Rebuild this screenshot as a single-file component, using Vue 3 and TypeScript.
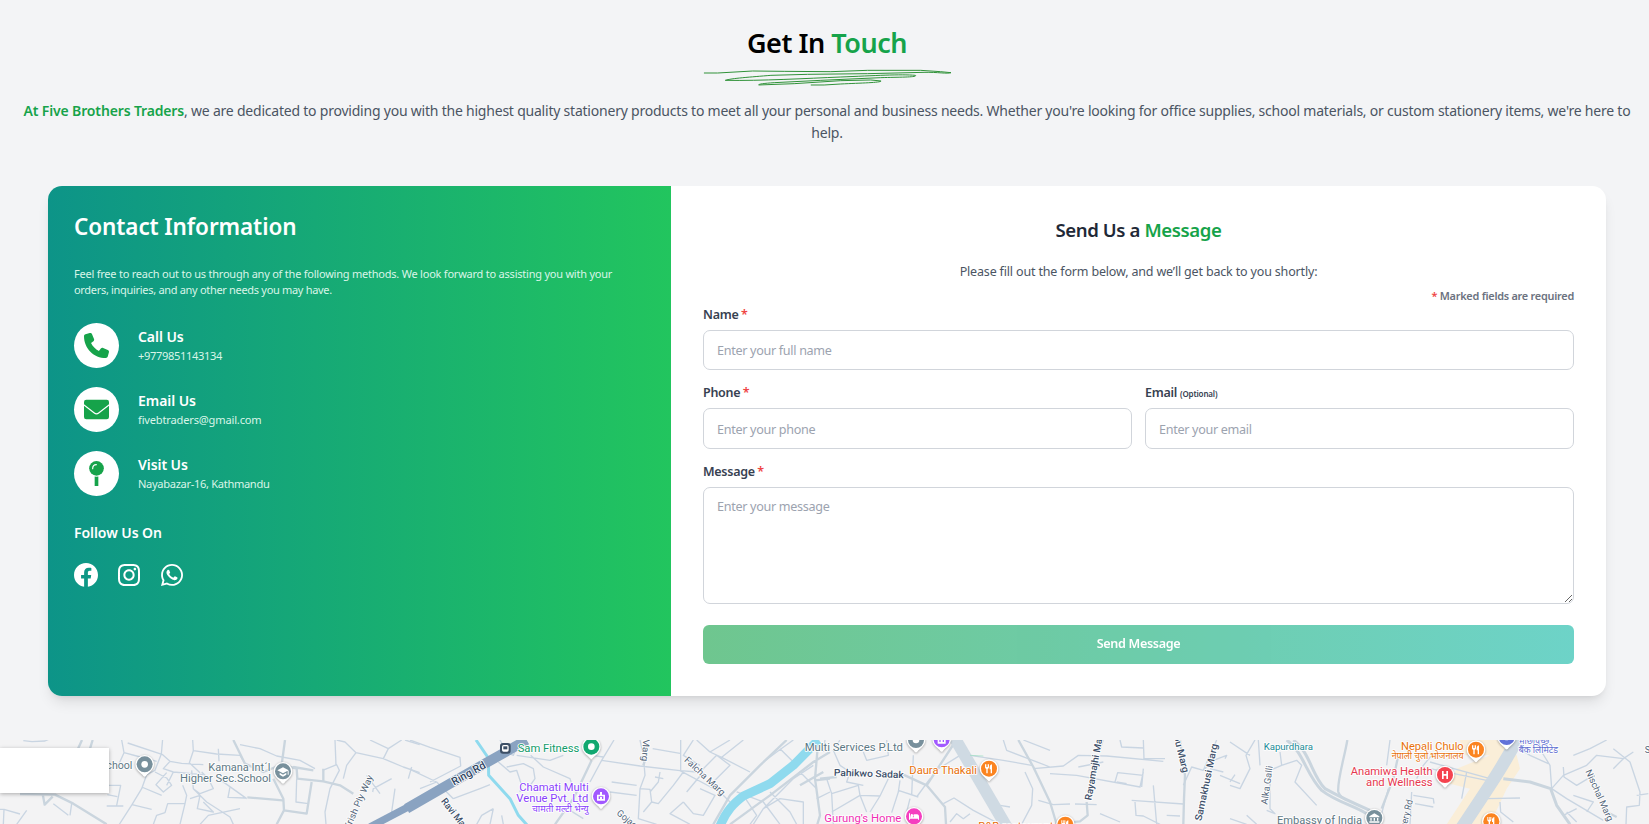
<script setup lang="ts">
interface Road { d: string; w: number; c?: string }
interface Tile { x: number; areas?: { d: string; c: string }[]; roads: Road[] }
interface Label { x: number; y: number; t: string; c: string; s: number; w?: number; a?: 'start' | 'end'; r?: number; b?: number }
interface Pin { x: number; y: number; c: string; k: string }

const minor = '#c9d5e2'
const major = '#cad5de'
const river = '#8fdaee'
const highway = '#8aa3c1'

const tiles: Tile[] = [
  {
    x: 0,
    roads: [
      { w: 4, d: 'M70 16L96 19L135 17L146 12M365 14L372 52L355 90M372 52L410 62L470 78M383 23L488 58L510 78L545 84L610 88M488 10L484 56L465 105L440 118M578 14L580 46L568 82L600 112M580 46L650 56L720 60L735 86M655 40L657 78M510 78L490 100L520 110L610 118M465 110L500 128L515 150L490 170L468 148L500 112M440 118L425 160L396 208L358 267M425 155L485 180M396 208L455 222M320 150L362 150L350 210M322 178L352 184M548 150L560 180L555 205L503 205L495 232L470 240L460 267M555 205L540 267M520 110L500 150M575 105L580 160L620 200L690 245L700 267M580 160L600 175L640 160L625 130L605 110M570 190L600 180L592 220L640 230L610 200M600 267L625 240L720 220M690 155L684 186L735 188M656 130L740 190M720 28L780 40L830 62L900 75L945 100M890 130L888 200L925 205M968 105L1010 88L1018 105L990 160L975 230L978 267M1005 14L1008 90M1010 14L1035 20L1068 52L1150 70L1210 95L1259 112M1030 130L1040 90L1068 52M1110 14L1165 40L1205 14M1165 40L1150 70M1215 14L1259 28M1175 130L1120 160L1118 170M1235 95L1225 130M1185 160L1175 230M50 267L80 225M10 267L12 222L60 236M0 222L12 222M210 240L215 205M160 205L205 240M320 212L370 212M1100 120L1140 175' },
      { w: 7, d: 'M246 14L234 40M278 14L270 40M60 176L165 178L220 205L320 267M128 176L134 208L158 184M700 14L735 85L790 110L845 88L855 14M820 130L850 190L852 225L830 267M742 186L848 195M852 225L920 235L935 140M880 95L940 105M845 88L890 100L892 130L970 138L1020 150L1060 175M970 100L970 138' },
      { w: 22, c: highway, d: 'M1110 275L1260 196' },
    ],
  },
  {
    x: 410,
    roads: [
      { w: 4, d: 'M0 14L60 36L150 66L152 92L60 140M0 102L80 140L130 190M30 160L80 140M270 14L290 50L310 60L330 14M130 190L210 160L240 148M265 80L300 110L320 105L335 150L330 170M290 95L340 85L370 100L375 130L350 165M320 60L420 75L460 60M362 60L400 95L480 130L490 160M200 267L215 240L250 220M240 267L250 220M280 267L275 240M480 225L520 250M612 14L575 75L540 140M575 75L690 92L810 106M690 14L700 60L705 120L690 160L685 250L740 267M580 65L545 60M605 140L680 150M600 170L680 180M690 160L720 162L725 200L745 205L790 150L820 110M725 200L700 230M750 110L745 140L720 170M728 40L810 54M812 14L812 106M810 106L930 170L960 200M760 130L735 125M812 106L860 110M860 14L900 50L935 66L1020 110M900 50L960 14M935 66L1000 14M870 110L920 60L960 90L900 150M850 14L820 60L870 90M830 170L880 110M820 200L850 235L880 240L915 180L870 160M820 200L780 235L840 267M980 170L1060 200L1110 267M1000 180L1040 240L1020 267M1030 267L1060 220L1170 110L1220 160M1060 220L1110 190L1180 200L1180 267M1150 130L1210 90M1110 110L1150 80L1110 40M1060 80L1100 50L1150 14M1220 190L1260 170M1080 170L1140 230L1160 267' },
      { w: 7, d: 'M545 75L490 190L435 267M1225 14L1215 130L1230 240L1222 267M1130 14L1050 90L960 180L910 267M1240 110L1170 150M1260 50L1210 80L1080 180L960 267M1215 135L1260 130M700 90L705 75' },
      { w: 9, c: river, d: 'M198 14L235 68L236 120L300 190L325 240L352 270' },
      { w: 27, c: river, d: 'M930 272C950 225 970 205 1000 182L1080 145L1150 90L1225 14' },
      { w: 30, c: highway, d: 'M-10 220L120 145L230 82L350 14' },
    ],
  },
  {
    x: 820,
    roads: [
      { w: 4, d: 'M15 14L10 50M60 14L40 45L60 90L90 110L80 140L130 150M20 130L35 175L40 267M35 175L115 150L120 180L140 230M35 230L120 180L180 182M200 14L205 60L140 75L130 50M205 130L180 182L150 230M240 135L235 170L215 232M235 165L295 185M280 60L275 180M290 185L330 130M340 110L420 60L400 14M270 190L260 230M450 60L550 75L635 90M550 14L560 45L690 95M610 14L690 45M640 100L730 92L775 60L860 62L1030 78M690 115L770 120L960 155L970 110M775 95L850 80M885 140L893 112L970 120M900 14L905 35L970 38M970 14L972 70L1035 70M970 100L965 155M920 145L890 140M615 110L638 160L635 210L605 267M370 205L402 188L460 225L540 267M390 260L410 235L430 250L450 235M655 195L700 208L750 206M765 206L830 208M840 235L900 260M935 195L1090 206M945 200L948 240L970 242L1020 267M1000 150L1010 267M1090 150L1115 95L1150 105L1190 14M1150 105L1180 75L1220 60L1215 70M1200 120L1260 145M1210 110L1170 100M540 210L570 215M1040 240L1080 242' },
      { w: 7, d: 'M0 130L50 125M250 118L320 150L375 215L378 267M320 150L405 20M595 14L640 95L690 200L710 267M800 200L803 240L780 258L740 262M840 40L848 14M1090 267L1092 190L1095 120L1080 14' },
      { w: 36, c: '#cfdae3', d: 'M405 10L560 275' },
      { w: 2, c: '#9be0bf', d: 'M450 60L490 62' },
    ],
  },
  {
    x: 1230,
    areas: [{ d: 'M690 14L800 14L860 60L870 100L830 160L780 267L650 267L720 160L660 145L680 100L780 60L700 60Z', c: '#faeed8' }],
    roads: [
      { w: 4, d: 'M0 150L30 160L60 100L48 60L75 14M85 14L90 90M60 60L0 20M0 140L15 118M150 50L155 90L120 105L120 220L135 235L110 225M155 90L200 75L215 90L195 140L260 210M0 250L50 267M475 160L455 235M550 180L610 190L612 205M555 205L610 215M545 170L540 267M605 60L580 90L560 130M480 14L470 90M600 100L770 135M710 110L695 190M770 190L870 188M810 200L812 230L850 260M920 14L935 50L960 90L965 160M830 14L900 60L955 85M965 160L1000 120L1070 90L1100 60L1180 70L1210 50M1000 95L1002 125L1040 150L1090 120M1030 60L1080 40L1130 14M1150 40L1200 80L1230 170L1228 210L1190 215L1188 267M1150 100L1180 70M965 160L1010 190L1120 255M1000 240L1040 220M1010 230L1040 260M1030 180L1090 200L1070 230M1255 175L1220 180M50 240L80 267' },
      { w: 9, d: 'M170 14C220 50 230 120 275 165C320 200 370 210 410 235M190 14C240 50 245 120 285 160C330 185 350 195 420 225M820 130L900 140L962 160L980 210L1020 267' },
      { w: 7, d: 'M352 14C345 60 320 140 325 170C330 185 340 190 350 195M455 220L490 130L505 60M1120 225L1160 245' },
      { w: 4, d: 'M600 80L780 130' },
      { w: 38, c: '#cfdae3', d: 'M865 6C820 90 790 135 690 285' },
    ],
  },
]

const slate = '#5d7884'
const street = '#54667a'
const labels: Label[] = [
  { x: 397, y: 102, t: 'chool', c: slate, s: 31, w: 78, a: 'end' },
  { x: 625, y: 107, t: 'Kamana Int´l', c: slate, s: 31, w: 186 },
  { x: 540, y: 141, t: 'Higher Sec.School', c: slate, s: 31, w: 273 },
  { x: 1048, y: 285, t: 'Krish Ply Way', c: street, s: 28, w: 176, r: -66 },
  { x: 1362, y: 151, t: 'Ring Rd', c: '#2f4563', s: 33, w: 112, r: -29, b: 1 },
  { x: 1553, y: 50, t: 'Sam Fitness', c: '#129b6a', s: 32, w: 185 },
  { x: 1766, y: 168, t: 'Chamati Multi', c: '#8a3ffc', s: 32, w: 208, a: 'end' },
  { x: 1765, y: 201, t: 'Venue Pvt. Ltd', c: '#8a3ffc', s: 32, w: 216, a: 'end' },
  { x: 1766, y: 229, t: 'चामती मल्टी भेन्यु', c: '#8a3ffc', s: 26, w: 170, a: 'end' },
  { x: 1322, y: 198, t: 'Ravi Marg', c: '#3d506a', s: 29, w: 124, r: 52, b: 1 },
  { x: 1930, y: 8, t: 'Marg', c: street, s: 28, w: 70, r: 94 },
  { x: 2051, y: 76, t: 'Falcha Marg', c: street, s: 28, w: 156, r: 43 },
  { x: 1848, y: 236, t: 'Gojage', c: street, s: 28, w: 84, r: 40 },
  { x: 2414, y: 47, t: 'Multi Services P.Ltd', c: slate, s: 32, w: 295 },
  { x: 2501, y: 121, t: 'Pahikwo Sadak', c: '#3d506a', s: 29, w: 210, r: 2, b: 1 },
  { x: 2728, y: 117, t: 'Daura Thakali', c: '#e8710a', s: 32, w: 203 },
  { x: 2473, y: 259, t: "Gurung's Home", c: '#ef2fb4', s: 32, w: 231 },
  { x: 2935, y: 285, t: 'R&B restaurant', c: '#e8710a', s: 32, w: 225 },
  { x: 3274, y: 196, t: 'Rayamajhi Marg', c: '#3d506a', s: 29, w: 214, r: -80, b: 1 },
  { x: 3521, y: 3, t: 'ou Marg', c: '#3d506a', s: 29, w: 114, r: 76, b: 1 },
  { x: 3604, y: 258, t: 'Samakhusi Marg', c: '#3d506a', s: 29, w: 236, r: -78, b: 1 },
  { x: 3791, y: 43, t: 'Kapurdhara', c: '#1a8a96', s: 27, w: 148 },
  { x: 3802, y: 208, t: 'Alka Galli', c: street, s: 28, w: 116, r: -82 },
  { x: 3831, y: 266, t: 'Embassy of India', c: slate, s: 32, w: 255 },
  { x: 4391, y: 44, t: 'Nepali Chulo', c: '#e8710a', s: 32, w: 188, a: 'end' },
  { x: 4391, y: 72, t: 'नेपाली चुलो भोजनालय', c: '#e8710a', s: 26, w: 216, a: 'end' },
  { x: 4298, y: 120, t: 'Anamiwa Health', c: '#e63950', s: 32, w: 246, a: 'end' },
  { x: 4298, y: 153, t: 'and Wellness', c: '#e63950', s: 32, w: 200, a: 'end' },
  { x: 4210, y: 318, t: 'Surgery Rd', c: street, s: 28, w: 126, r: -77 },
  { x: 4558, y: 26, t: 'माछापुच्छ्रे', c: '#5b6bd0', s: 26, w: 90 },
  { x: 4556, y: 53, t: 'बैंक लिमिटेड', c: '#5b6bd0', s: 26, w: 118 },
  { x: 4756, y: 108, t: 'Nischal Marg', c: street, s: 28, w: 166, r: 66 },
  { x: 4934, y: 52, t: 'S', c: street, s: 28 },
]

const pins: Pin[] = [
  { x: 434, y: 87, c: '#78909c', k: 'dot' },
  { x: 849, y: 108, c: '#78909c', k: 'cap' },
  { x: 1774, y: 34, c: '#12a870', k: 'dot' },
  { x: 1803, y: 183, c: '#a259ff', k: 'venue' },
  { x: 2748, y: 14, c: '#78909c', k: 'dot' },
  { x: 2825, y: 12, c: '#a259ff', k: 'venue' },
  { x: 2967, y: 100, c: '#fb8420', k: 'fork' },
  { x: 2742, y: 243, c: '#f53fc0', k: 'bed' },
  { x: 3196, y: 268, c: '#fb8420', k: 'fork' },
  { x: 4123, y: 248, c: '#78909c', k: 'bank' },
  { x: 4428, y: 43, c: '#fb8420', k: 'fork' },
  { x: 4335, y: 119, c: '#f5434f', k: 'h' },
  { x: 4520, y: 5, c: '#6272d8', k: 'dot' },
  { x: 4474, y: 258, c: '#fb8420', k: 'fork' },
]
</script>

<template>
  <div class="page">
    <header class="intro">
      <h1>Get In <em>Touch</em></h1>
      <svg class="scribble" viewBox="60 172 760 60" fill="none" stroke="#2f9238" stroke-width="3" stroke-linecap="round">
        <path d="M70 190L110 190L215 184L310 185L450 186L560 182L720 182L780 186L811 189C800 193 770 187 730 188L560 192L380 194L270 197C210 202 150 206 133 212C240 214 380 206 480 202C580 198 660 193 704 197C712 203 660 202 600 204L420 212L280 219C250 221 233 223 233 226L340 222L480 213L570 211L601 214C600 219 540 220 480 223L430 226L391 226" />
      </svg>
      <p><b>At Five Brothers Traders</b>, we are dedicated to providing you with the highest quality stationery products to meet all your personal and business needs. Whether you're looking for office supplies, school materials, or custom stationery items, we're here to<br>help.</p>
    </header>

    <main class="card">
      <section class="info">
        <h2>Contact Information</h2>
        <p class="lead">Feel free to reach out to us through any of the following methods. We look forward to assisting you with your<br><span class="tight">orders, inquiries, and any other needs you may have.</span></p>
        <ul class="contacts">
          <li>
            <i class="disc"><svg viewBox="0 0 512 512" width="25" height="25"><path d="M164.900 24.600c-7.700-18.600-28-28.500-47.400-23.200l-88 24C12.100 30.200 0 46 0 64C0 311.400 200.600 512 448 512c18 0 33.800-12.100 38.600-29.500l24-88c5.300-19.400-4.600-39.700-23.200-47.400l-96-40c-16.300-6.800-35.200-2.100-46.300 11.600L304.700 368C234.300 334.700 177.300 277.700 144 207.300L193.300 167c13.700-11.200 18.400-30 11.600-46.300l-40-96z" /></svg></i>
            <div><h4>Call Us</h4><p class="digits">+9779851143134</p></div>
          </li>
          <li>
            <i class="disc"><svg viewBox="0 0 75 75" width="25" height="25"><rect y="8" width="75" height="59" rx="7" /><path d="M-1 23L31 48Q37.500 53 44 48L76 23" fill="none" stroke="#fff" stroke-width="3.500" /></svg></i>
            <div><h4>Email Us</h4><p class="mail">fivebtraders@gmail.com</p></div>
          </li>
          <li>
            <i class="disc"><svg viewBox="0 0 75 75" width="25" height="25"><circle cx="37.500" cy="22" r="22" /><path d="M32 46.500Q37.500 47.500 43 46.500V75H32Z" /><path d="M26 23Q26 11 37 11" fill="none" stroke="#fff" stroke-width="3.500" stroke-linecap="round" /></svg></i>
            <div><h4>Visit Us</h4><p>Nayabazar-16, Kathmandu</p></div>
          </li>
        </ul>
        <h4 class="follow">Follow Us On</h4>
        <div class="social">
          <svg viewBox="8 8 496 496" width="24" height="24"><path d="M504 256C504 119 393 8 256 8S8 119 8 256c0 123.780 90.690 226.380 209.250 245V327.690h-63V256h63v-54.640c0-62.150 37-96.480 93.670-96.480 27.140 0 55.520 4.840 55.520 4.840v61h-31.280c-30.800 0-40.410 19.120-40.410 38.730V256h68.780l-11 71.690h-57.780V501C413.310 482.380 504 379.780 504 256z" /></svg>
          <svg viewBox="0 32 448 448" width="22" height="22"><path d="M224.100 141c-63.600 0-114.900 51.300-114.900 114.900s51.300 114.900 114.900 114.900S339 319.500 339 255.900 287.700 141 224.100 141zm0 189.600c-41.100 0-74.700-33.500-74.700-74.700s33.500-74.700 74.700-74.700 74.700 33.500 74.700 74.700-33.600 74.700-74.700 74.700zm146.400-194.300c0 14.900-12 26.800-26.800 26.800-14.900 0-26.800-12-26.800-26.800s12-26.800 26.800-26.800 26.800 12 26.800 26.800zm76.100 27.200c-1.700-35.900-9.900-67.700-36.200-93.900-26.200-26.200-58-34.400-93.900-36.200-37-2.100-147.900-2.100-184.900 0-35.800 1.700-67.600 9.900-93.900 36.100s-34.400 58-36.200 93.900c-2.100 37-2.100 147.900 0 184.900 1.700 35.900 9.900 67.700 36.200 93.900s58 34.400 93.900 36.200c37 2.100 147.900 2.100 184.900 0 35.900-1.700 67.700-9.900 93.900-36.200 26.200-26.200 34.400-58 36.200-93.900 2.100-37 2.100-147.800 0-184.800zM398.800 388c-7.800 19.600-22.900 34.700-42.600 42.600-29.500 11.700-99.500 9-132.100 9s-102.700 2.600-132.100-9c-19.600-7.800-34.700-22.900-42.600-42.600-11.700-29.500-9-99.500-9-132.100s-2.600-102.700 9-132.100c7.800-19.600 22.900-34.700 42.600-42.600 29.500-11.700 99.500-9 132.100-9s102.700-2.600 132.100 9c19.600 7.800 34.700 22.900 42.600 42.600 11.700 29.500 9 99.500 9 132.100s2.700 102.700-9 132.100z" /></svg>
          <svg viewBox="0 32 448 448" width="22" height="22"><path d="M380.900 97.100C339 55.100 283.200 32 223.900 32c-122.400 0-222 99.600-222 222 0 39.100 10.200 77.300 29.600 111L0 480l117.700-30.900c32.400 17.700 68.900 27 106.100 27h.1c122.300 0 224.100-99.600 224.100-222 0-59.300-25.200-115-67.100-157zm-157 341.600c-33.200 0-65.700-8.900-94-25.700l-6.700-4-69.800 18.300L72 359.200l-4.400-7c-18.500-29.400-28.200-63.300-28.200-98.200 0-101.700 82.800-184.500 184.600-184.500 49.300 0 95.600 19.200 130.400 54.100 34.800 34.900 56.200 81.200 56.100 130.500 0 101.800-84.900 184.600-186.600 184.600zm101.200-138.200c-5.500-2.800-32.800-16.200-37.900-18-5.100-1.900-8.800-2.800-12.500 2.800-3.700 5.600-14.300 18-17.600 21.800-3.200 3.700-6.500 4.200-12 1.400-32.600-16.300-54-29.100-75.500-66-5.700-9.800 5.700-9.100 16.300-30.300 1.800-3.700.9-6.900-.5-9.700-1.400-2.800-12.500-30.100-17.100-41.200-4.500-10.800-9.100-9.300-12.500-9.500-3.200-.2-6.900-.2-10.600-.2-3.700 0-9.700 1.400-14.800 6.900-5.100 5.600-19.400 19-19.400 46.300 0 27.300 19.900 53.700 22.600 57.400 2.800 3.700 39.100 59.700 94.800 83.800 35.200 15.200 49 16.500 66.600 13.900 10.700-1.600 32.800-13.400 37.400-26.400 4.600-13 4.600-24.100 3.200-26.400-1.300-2.500-5-3.900-10.500-6.600z" /></svg>
        </div>
      </section>

      <form class="form" @submit.prevent>
        <h3>Send Us a <em>Message</em></h3>
        <p class="hint">Please fill out the form below, and we’ll get back to you shortly:</p>
        <p class="marked"><s>*</s> Marked fields are required</p>
        <label class="field"><span class="cap">Name <s>*</s></span><input type="text" placeholder="Enter your full name"></label>
        <div class="pair">
          <label class="field"><span class="cap">Phone <s>*</s></span><input type="tel" placeholder="Enter your phone"></label>
          <label class="field"><span class="cap">Email <small>(Optional)</small></span><input type="email" placeholder="Enter your email"></label>
        </div>
        <label class="field"><span class="cap">Message <s>*</s></span><textarea placeholder="Enter your message"></textarea></label>
        <button type="submit">Send Message</button>
      </form>
    </main>

    <section class="map">
      <svg viewBox="0 14 4947 253" preserveAspectRatio="none">
        <rect y="14" width="4947" height="260" fill="#f3f3f4" />
        <g v-for="(t, i) in tiles" :key="i" :transform="`translate(${t.x * 3} 0)`" fill="none" stroke-linejoin="round">
          <path v-for="(a, j) in t.areas" :key="'a' + j" :d="a.d" :fill="a.c" />
          <path v-for="(r, j) in t.roads" :key="j" :d="r.d" :stroke-width="r.w" :stroke="r.c ?? (r.w > 5 ? major : minor)" />
        </g>
        <g><rect x="1500" y="23" width="32" height="32" rx="9" fill="#3c4f66" /><rect x="1506" y="29" width="20" height="20" rx="5" fill="#fff" /><rect x="1510" y="33" width="12" height="9" fill="#3c4f66" /></g>
        <g v-for="(p, i) in pins" :key="'p' + i" :transform="`translate(${p.x} ${p.y})`">
          <path class="drop" d="M-28 0A28 28 0 1 1 28 0C28 18 12 24 4 35Q0 40 -4 35C-12 24 -28 18 -28 0Z" fill="#fff" />
          <circle r="24" :fill="p.c" />
          <circle v-if="p.k === 'dot'" r="10" fill="#fff" />
          <path v-else-if="p.k === 'cap'" d="M-17 -3L0 -12L17 -3L0 6ZM-10 4L0 10L10 4V10L0 16L-10 10ZM14 -2H17V10H14Z" fill="#fff" />
          <path v-else-if="p.k === 'venue'" d="M-12 -5H-3V-13H3V-5H12V13H-12ZM-7 0V8H-3V2H3V8H7V0Z" fill="#fff" fill-rule="evenodd" />
          <path v-else-if="p.k === 'fork'" d="M-12 -13H-9V-5H-7V-13H-5V-5H-3V-13H0V-4Q0 0 -4 1V14H-8V1Q-12 0 -12 -4ZM9 -13V14H5V2H2V-6Q3 -12 9 -13Z" fill="#fff" />
          <path v-else-if="p.k === 'bed'" d="M-15 -9H-12V3H-1V-6H10Q15 -5 15 0V10H12V7H-12V10H-15ZM-10 -3A4 4 0 1 1 -3 0A4 4 0 1 1 -10 -3Z" fill="#fff" />
          <path v-else-if="p.k === 'bank'" d="M-15 -5L0 -14L15 -5V-2H-15ZM-12 0H-8V8H-12ZM-2 0H2V8H-2ZM8 0H12V8H8ZM-15 10H15V14H-15Z" fill="#fff" />
          <path v-else d="M-9 -12H-4V-3H4V-12H9V12H4V2H-4V12H-9Z" fill="#fff" />
        </g>
        <text v-for="(l, i) in labels" :key="'l' + i" :transform="`translate(${l.x} ${l.y}) rotate(${l.r ?? 0})`" :fill="l.c" :font-size="l.s" :font-weight="l.b ? 500 : 400" :text-anchor="l.a ?? 'start'" :textLength="l.w" lengthAdjust="spacingAndGlyphs">{{ l.t }}</text>
      </svg>
      <div class="map-card"></div>
    </section>
  </div>
</template>

<style>
html, body { margin: 0; background: #f3f4f6; overflow: hidden; }
</style>

<style scoped>
.page { width: 1654px; height: 824px; overflow: hidden; background: #f3f4f6; font-family: "Noto Sans", "Open Sans", sans-serif; color: #374151; }
* { box-sizing: border-box; }
h1, h2, h3, h4, p, ul { margin: 0; padding: 0; }
em { font-style: normal; color: #16a34a; }
s { text-decoration: none; color: #ef4444; }
.intro { height: 186px; padding-top: 25px; text-align: center; }
h1 { font-size: 27px; line-height: 36px; color: #000; font-weight: 600; letter-spacing: -.48px; }
.scribble { display: block; width: 253px; height: 20px; margin: 6px auto 0; }
.intro p { margin-top: 13px; font-size: 14px; line-height: 22px; color: #4b5563; white-space: nowrap; letter-spacing: -.217px; }
.intro b { color: #16a34a; font-weight: 600; letter-spacing: -.146px; }
.card { display: flex; width: 1558px; height: 510px; margin-left: 48px; border-radius: 14px; overflow: hidden; background: #fff; box-shadow: 0 9px 14px -3px rgba(0,0,0,.1), 0 4px 6px -4px rgba(0,0,0,.1); }
.info { width: 623px; padding: 25px 26px 24px; background: linear-gradient(to right, #0d9488, #22c55e); color: #fff; white-space: nowrap; }
h2 { font-size: 22.500px; line-height: 32px; font-weight: 600; letter-spacing: -.1px; }
.lead { margin-top: 23px; font-size: 11px; line-height: 16px; color: #d9f5e8; letter-spacing: -.225px; }
.tight { letter-spacing: -.31px; }
.contacts { list-style: none; margin-top: 25px; display: flex; flex-direction: column; gap: 19px; }
.contacts li { display: flex; align-items: center; gap: 19px; height: 45px; }
.disc { display: flex; align-items: center; justify-content: center; width: 45px; height: 45px; border-radius: 50%; background: #fff; fill: #16a34a; }
h4 { font-size: 14px; line-height: 20px; font-weight: 600; letter-spacing: -.06px; }
.contacts p { font-size: 11.100px; line-height: 17px; color: #d9f5e8; letter-spacing: -.32px; }
.contacts .digits { letter-spacing: -.35px; }
.contacts .mail { letter-spacing: -.18px; }
.follow { margin-top: 27px; }
.social { display: flex; align-items: center; gap: 20px; margin-top: 20px; fill: #fff; }
.social svg:last-child { margin-left: 1px; }
.form { flex: 1; padding: 30px 32px 0; }
h3 { font-size: 18.600px; line-height: 28px; font-weight: 600; color: #1f2937; text-align: center; letter-spacing: -.4px; }
.hint { margin-top: 18px; font-size: 12.500px; line-height: 20px; text-align: center; color: #4b5563; letter-spacing: -.166px; }
.marked { margin-top: 6px; font-size: 10.900px; line-height: 16px; text-align: right; font-weight: 600; color: #6b7280; letter-spacing: -.25px; }
.field { display: block; }
.cap { display: block; height: 20px; font-size: 12.500px; line-height: 21px; font-weight: 600; margin-bottom: 6px; white-space: nowrap; letter-spacing: -.28px; }
.cap s { margin-left: -.5px; }
.cap small { font-size: 8px; letter-spacing: -.15px; }
input, textarea { display: block; width: 100%; height: 40px; border: 1px solid #d1d5db; border-radius: 7px; padding: 0 13px; font: 12.600px/20px "Noto Sans", sans-serif; letter-spacing: -.31px; background: #fff; outline: none; }
::placeholder { color: #9ca3af; opacity: 1; }
.pair { display: grid; grid-template-columns: 1fr 1fr; gap: 13px; margin: 12px 0; }
.pair input { height: 41px; padding-top: 1px; }
textarea { height: 117px; padding: 9px 13px; }
button { display: block; width: 100%; height: 39px; margin-top: 21px; padding: 0 0 2px; border: 0; border-radius: 6px; background: linear-gradient(to right, #16a34a, #14b8a6); opacity: .62; color: #fff; font: 600 12.600px/20px "Noto Sans", sans-serif; letter-spacing: -.32px; }
.map { position: relative; margin-top: 44px; width: 1649px; height: 84px; }
.map svg { display: block; width: 1649px; height: 84.333px; font-family: Roboto, "Noto Sans", sans-serif; }
.map text { paint-order: stroke; stroke: #fff; stroke-width: 5px; stroke-linejoin: round; }
.drop { filter: drop-shadow(0 2px 3px rgba(0,0,0,.35)); }
.map-card { position: absolute; left: 0; top: 8px; width: 109px; height: 45px; background: #fff; box-shadow: 0 1px 4px rgba(0,0,0,.3); }
</style>
